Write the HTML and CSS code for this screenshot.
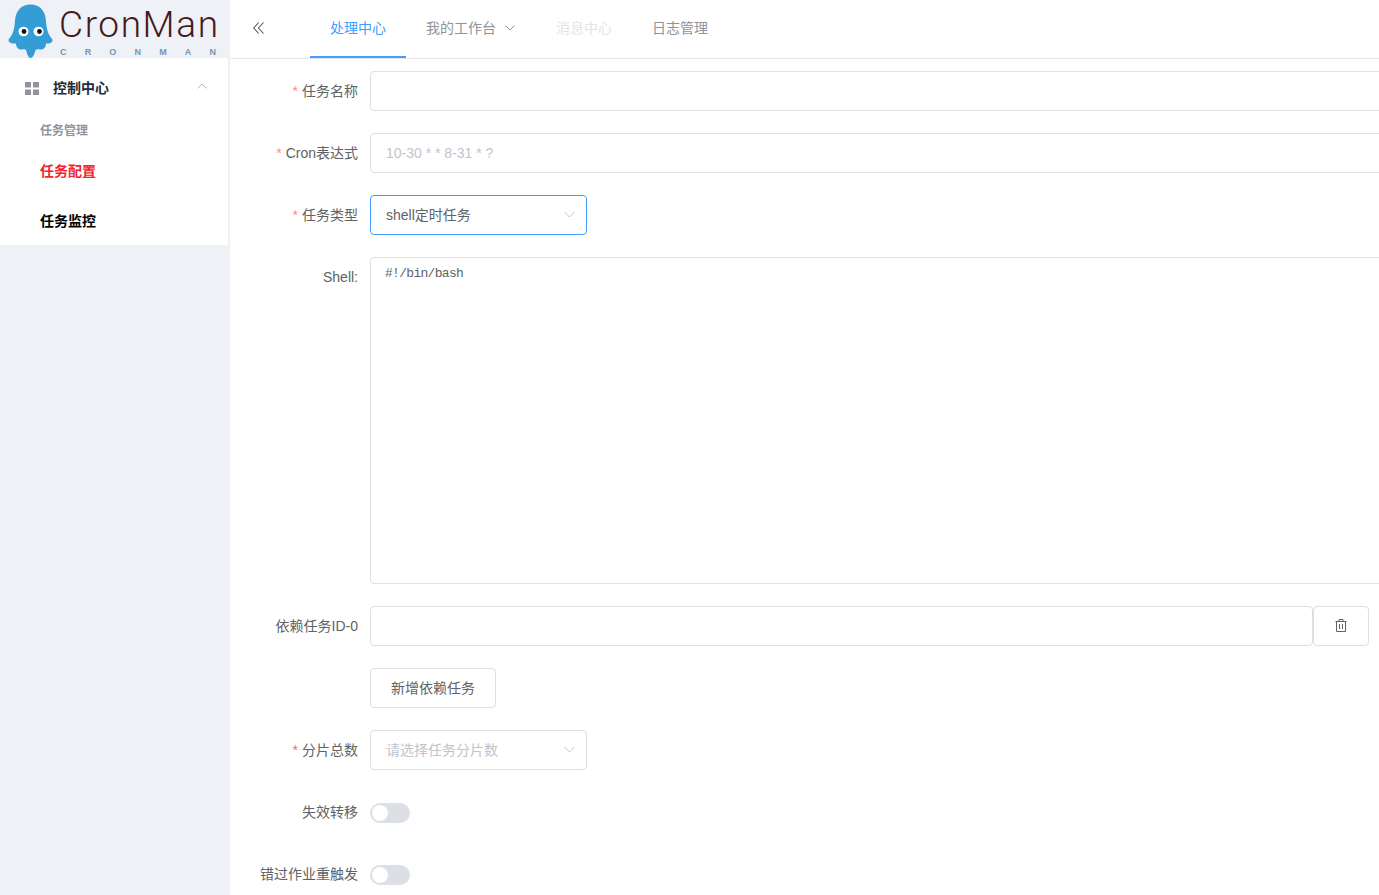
FILE: index.html
```html
<!DOCTYPE html>
<html lang="zh-CN">
<head>
<meta charset="UTF-8" />
<meta name="viewport" content="width=device-width, initial-scale=1" />
<title>CronMan - 任务配置</title>
<link rel="stylesheet" href="styles.css">
</head>
<body>
<aside class="sidebar">
  <div class="logo">
    <svg class="logo-mark" width="61" height="58" viewBox="0 0 61 58">
      <path fill="#359dd6" d="M30.5 4.5C21 4.5 15.5 11 15 21C14.5 30 12.5 35 8.5 39.5C8 43 13 44 16 43.5C16 47 18 50 22 49.5C24 49 25 49 26 50C27 54 28.5 58 30.5 58C33 58 34.5 54 35.5 50C36.5 49 38 49 40 49.5C44 50 46 47 46 43.5C49 44 53 43 52.5 39.5C48.5 35 46.5 30 46 21C45.5 11 40 4.5 30.5 4.5Z"/>
      <ellipse cx="23.5" cy="31.5" rx="5" ry="4.8" fill="#fff"/>
      <ellipse cx="38.5" cy="31.5" rx="5" ry="4.8" fill="#fff"/>
      <circle cx="24" cy="31.5" r="2.4" fill="#111"/>
      <circle cx="39.5" cy="31.5" r="2.4" fill="#111"/>
    </svg>
    <div class="logo-text">
      <div class="logo-name">CronMan</div>
      <div class="logo-sub"><span>C</span><span>R</span><span>O</span><span>N</span><span>M</span><span>A</span><span>N</span></div>
    </div>
  </div>
  <nav class="menu">
    <div class="menu-title">
      <svg width="14" height="13" viewBox="0 0 14 13" fill="#909399">
        <rect x="0" y="0" width="6" height="5.5"/>
        <rect x="8" y="0" width="6" height="5.5"/>
        <rect x="0" y="7.5" width="6" height="5.5"/>
        <rect x="8" y="7.5" width="6" height="5.5"/>
      </svg>
      <span class="menu-title-text">控制中心</span>
      <svg class="menu-arrow" width="10" height="6" viewBox="0 0 10 6" fill="none" stroke="#b4b8c0" stroke-width="1">
        <path d="M0.5 5.5L5 1L9.5 5.5"/>
      </svg>
    </div>
    <a class="menu-item menu-item-small">任务管理</a>
    <a class="menu-item menu-item-active">任务配置</a>
    <a class="menu-item menu-item-dark">任务监控</a>
  </nav>
</aside>

<div class="main">
  <header class="topbar">
    <svg class="collapse" width="11" height="12" viewBox="0 0 11 12" fill="none" stroke="#4f5d6e" stroke-width="1.1">
      <path d="M5.7 0.5L0.7 6L5.7 11.5"/>
      <path d="M10.5 0.5L5.5 6L10.5 11.5"/>
    </svg>
    <div class="tabs">
      <a class="tab tab-active">处理中心</a>
      <a class="tab">我的工作台
        <svg class="tab-arrow" width="10" height="6" viewBox="0 0 10 6" fill="none" stroke="#909399" stroke-width="1">
          <path d="M0.5 0.5L5 5L9.5 0.5"/>
        </svg>
      </a>
      <a class="tab tab-disabled">消息中心</a>
      <a class="tab">日志管理</a>
    </div>
  </header>

  <form class="task-form">
    <div class="form-row">
      <label class="form-label required">任务名称</label>
      <input class="field field-wide" type="text" />
    </div>
    <div class="form-row">
      <label class="form-label required">Cron表达式</label>
      <input class="field field-wide" type="text" placeholder="10-30 * * 8-31 * ?" />
    </div>
    <div class="form-row">
      <label class="form-label required">任务类型</label>
      <div class="select select-focus">
        <span>shell定时任务</span>
        <svg class="select-arrow" width="11" height="7" viewBox="0 0 11 7" fill="none" stroke="#c0c4cc" stroke-width="1">
          <path d="M0.5 1L5.5 6L10.5 1"/>
        </svg>
      </div>
    </div>
    <div class="form-row">
      <label class="form-label">Shell:</label>
      <textarea class="field field-wide code" spellcheck="false">#!/bin/bash</textarea>
    </div>
    <div class="form-row">
      <label class="form-label">依赖任务ID-0</label>
      <input class="field field-dep" type="text" />
      <button class="btn btn-icon" type="button">
        <svg width="12" height="13" viewBox="0 0 12 13" fill="none" stroke="#606266" stroke-width="1">
          <path d="M0.5 2.5H11.5"/>
          <path d="M4 2.5V0.5H8V2.5"/>
          <path d="M1.5 2.5V12.5H10.5V2.5"/>
          <path d="M4.5 5V10M7.5 5V10"/>
        </svg>
      </button>
    </div>
    <div class="form-row">
      <div class="form-label"></div>
      <button class="btn" type="button">新增依赖任务</button>
    </div>
    <div class="form-row">
      <label class="form-label required required-strong">分片总数</label>
      <div class="select">
        <span class="placeholder">请选择任务分片数</span>
        <svg class="select-arrow" width="11" height="7" viewBox="0 0 11 7" fill="none" stroke="#c0c4cc" stroke-width="1">
          <path d="M0.5 1L5.5 6L10.5 1"/>
        </svg>
      </div>
    </div>
    <div class="form-row">
      <label class="form-label">失效转移</label>
      <span class="switch"></span>
    </div>
    <div class="form-row">
      <label class="form-label">错过作业重触发</label>
      <span class="switch"></span>
    </div>
  </form>
</div>
</body>
</html>
```

FILE: styles.css
```css
html, body {
  height: 100%;
}
body {
  margin: 0;
  display: flex;
  height: 895px;
  overflow: hidden;
  background: #fff;
  color: #606266;
  font-family: "Liberation Sans", "Noto Sans CJK SC", sans-serif;
  font-size: 14px;
}
.sidebar {
  width: 230px;
  flex-shrink: 0;
  background: #eef1f6;
}
.logo {
  height: 58px;
  display: flex;
}
.logo-mark {
  flex-shrink: 0;
}
.logo-text {
  margin-left: -2px;
}
.logo-name {
  margin-top: 5px;
  height: 37px;
  font-family: Roboto, sans-serif;
  font-weight: 300;
  font-size: 37px;
  line-height: 40px;
  letter-spacing: 1.6px;
  color: #47181c;
  white-space: nowrap;
}
.logo-sub {
  display: flex;
  justify-content: space-between;
  margin-top: 5px;
  padding-left: 1px;
  width: 156px;
  font-size: 9px;
  line-height: 10px;
  font-weight: bold;
  color: #7396ba;
}
.menu {
  width: 228px;
  height: 187px;
  background: #fff;
}
.menu-title {
  height: 60px;
  display: flex;
  align-items: center;
  padding-left: 25px;
  padding-right: 21px;
}
.menu-title-text {
  margin-left: 14px;
  margin-bottom: 2px;
  font-weight: 700;
  color: #1f2d3d;
  flex-grow: 1;
}
.menu-arrow {
  margin-top: -5px;
}
.menu-item {
  display: block;
  padding-left: 40px;
  font-weight: 700;
}
.menu-item-small {
  margin-top: 1px;
  height: 25px;
  line-height: 25px;
  font-size: 12px;
  color: #909399;
}
.menu-item-active {
  margin-top: 2px;
  height: 50px;
  line-height: 50px;
  color: #f5222d;
}
.menu-item-dark {
  height: 50px;
  line-height: 50px;
  color: #000;
}
.main {
  flex-grow: 1;
  min-width: 0;
  overflow: hidden;
}
.topbar {
  height: 58px;
  display: flex;
  border-bottom: 1px solid #e6e6e6;
}
.collapse {
  margin: 22px 0 0 23px;
  flex-shrink: 0;
}
.tabs {
  display: flex;
  margin-left: 46px;
}
.tab {
  height: 56px;
  line-height: 56px;
  padding: 0 20px;
  color: #909399;
  white-space: nowrap;
  border-bottom: 2px solid transparent;
}
.tab-active {
  color: #409eff;
  border-bottom-color: #409eff;
}
.tab-disabled {
  color: #e3e4e6;
}
.tab-arrow {
  margin-left: 5px;
  margin-right: 1px;
  vertical-align: 2px;
}
.task-form {
  padding-top: 12px;
}
.form-row {
  display: flex;
  align-items: flex-start;
  margin-bottom: 22px;
}
.form-label {
  width: 128px;
  margin-right: 12px;
  flex-shrink: 0;
  text-align: right;
  line-height: 40px;
  height: 40px;
  color: #606266;
  white-space: nowrap;
}
.required::before {
  content: "*";
  color: #f56c6c;
  margin-right: 4px;
  opacity: 0.75;
}
.required-strong::before {
  opacity: 1;
}
.field {
  box-sizing: border-box;
  height: 40px;
  padding: 0 15px;
  border: 1px solid #dcdfe6;
  border-radius: 4px;
  background: #fff;
  color: #606266;
  font-family: inherit;
  font-size: 14px;
  outline: none;
  flex-shrink: 0;
}
.field::placeholder {
  color: #c0c4cc;
}
.field-wide {
  width: 1040px;
}
.field-dep {
  width: 943px;
}
.code {
  display: block;
  height: 327px;
  padding: 5px 14px;
  font-family: "Liberation Mono", monospace;
  font-size: 13px;
  letter-spacing: -0.7px;
  line-height: 22px;
  resize: none;
}
.select {
  box-sizing: border-box;
  width: 217px;
  height: 40px;
  padding: 0 11px 2px 15px;
  display: flex;
  align-items: center;
  justify-content: space-between;
  border: 1px solid #dcdfe6;
  border-radius: 4px;
  color: #606266;
}
.select-focus {
  border-color: #409eff;
}
.placeholder {
  color: #c0c4cc;
}
.btn {
  box-sizing: border-box;
  width: 126px;
  height: 40px;
  padding: 0 0 2px;
  border: 1px solid #dcdfe6;
  border-radius: 4px;
  background: #fff;
  color: #606266;
  font-family: inherit;
  font-size: 14px;
}
.btn-icon {
  width: 56px;
  flex-shrink: 0;
  display: flex;
  align-items: center;
  justify-content: center;
}
.switch {
  position: relative;
  display: block;
  width: 40px;
  height: 20px;
  margin-top: 11px;
  border-radius: 10px;
  background: #dcdfe6;
}
.switch::after {
  content: "";
  position: absolute;
  top: 2px;
  left: 2px;
  width: 16px;
  height: 16px;
  border-radius: 50%;
  background: #fff;
}
```
